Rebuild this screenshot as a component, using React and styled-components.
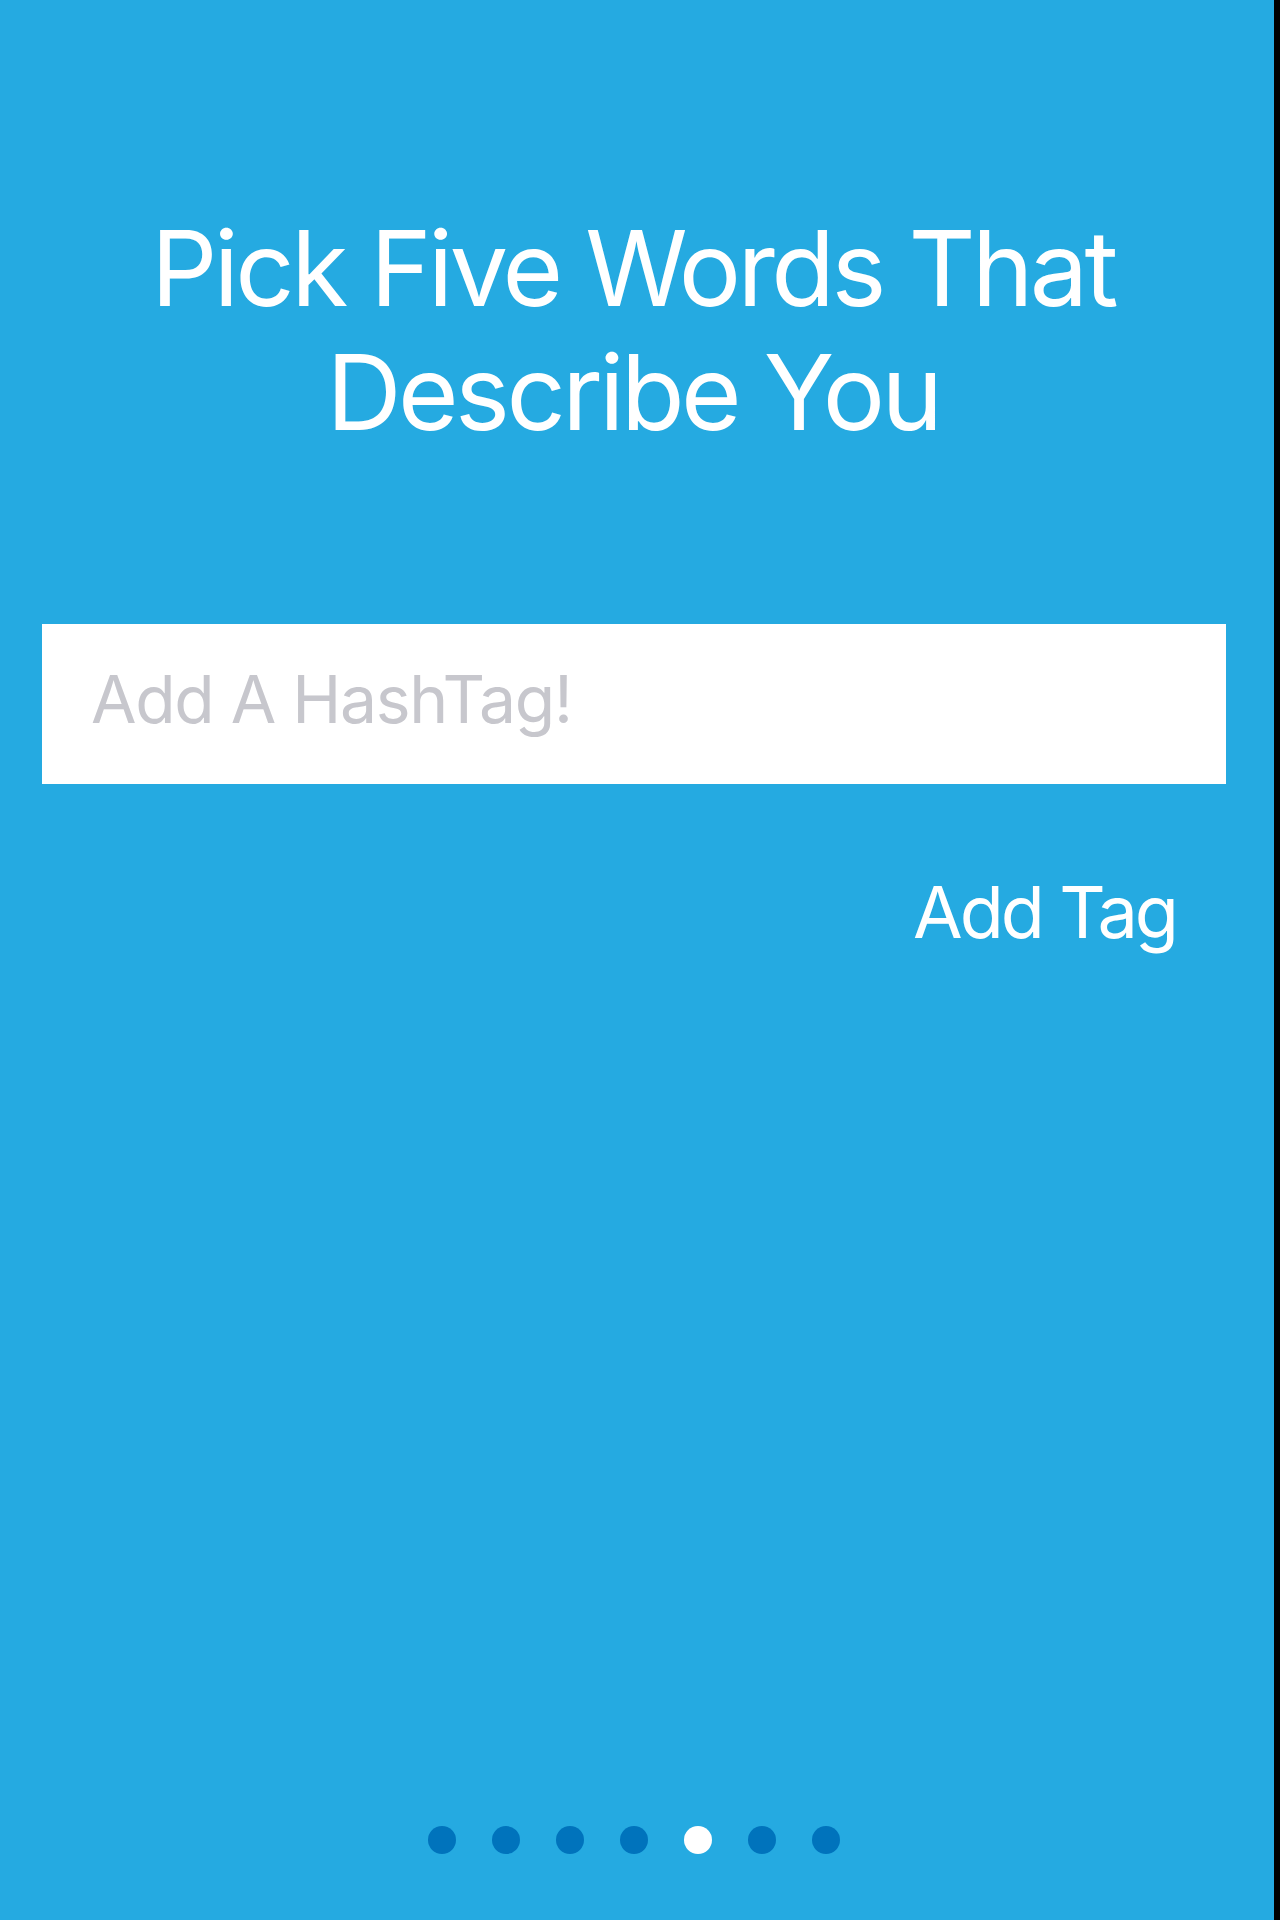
import styled, { createGlobalStyle } from "styled-components";

const GlobalStyle = createGlobalStyle`
    html, body {
        margin: 0;
        padding: 0;
        background: #000000;
    }
    * {
        box-sizing: border-box;
    }
`;

const dots = [0, 1, 2, 3, 4, 5, 6];
const activeDot = 4;

function App() {
    return (
        <>
            <GlobalStyle />
            <Screen>
                <Title>
                    Pick Five Words That
                    <br />
                    Describe You
                </Title>
                <TagInput placeholder="Add A HashTag!" />
                <ButtonRow>
                    <AddButton>Add Tag</AddButton>
                </ButtonRow>
                <Pager>
                    {dots.map((d) => (
                        <Dot key={d} $active={d === activeDot} />
                    ))}
                </Pager>
            </Screen>
        </>
    );
}

export default App;

const Screen = styled.div`
    width: 1274px;
    height: 1920px;
    background-color: #25aae1;
    display: flex;
    flex-direction: column;
    font-family: Inter, "Liberation Sans", sans-serif;
`;

const Title = styled.h1`
    margin: 206px 0 0 0;
    padding-right: 8px;
    font-size: 104px;
    line-height: 124px;
    font-weight: 400;
    letter-spacing: -3.6px;
    color: #ffffff;
    text-align: center;
`;

const TagInput = styled.input`
    margin: 170px 48px 0 42px;
    height: 160px;
    border: none;
    outline: none;
    background: #ffffff;
    padding: 0 0 10px 49px;
    font-family: Inter, "Liberation Sans", sans-serif;
    font-size: 66px;
    letter-spacing: -1.3px;
    color: #333333;

    &::placeholder {
        color: #c7c7cd;
    }
`;

const ButtonRow = styled.div`
    display: flex;
    justify-content: flex-end;
    padding-right: 98px;
    margin-top: 88px;
`;

const AddButton = styled.button`
    border: none;
    background: none;
    padding: 0;
    font-family: Inter, "Liberation Sans", sans-serif;
    font-size: 72px;
    line-height: 80px;
    letter-spacing: -3px;
    color: #ffffff;
    cursor: pointer;
`;

const Pager = styled.div`
    margin-top: auto;
    margin-bottom: 66px;
    display: flex;
    justify-content: center;
    gap: 36px;
    padding-right: 6px;
`;

const Dot = styled.span`
    width: 28px;
    height: 28px;
    border-radius: 50%;
    background-color: ${(p) => (p.$active ? "#ffffff" : "#0073bc")};
`;
